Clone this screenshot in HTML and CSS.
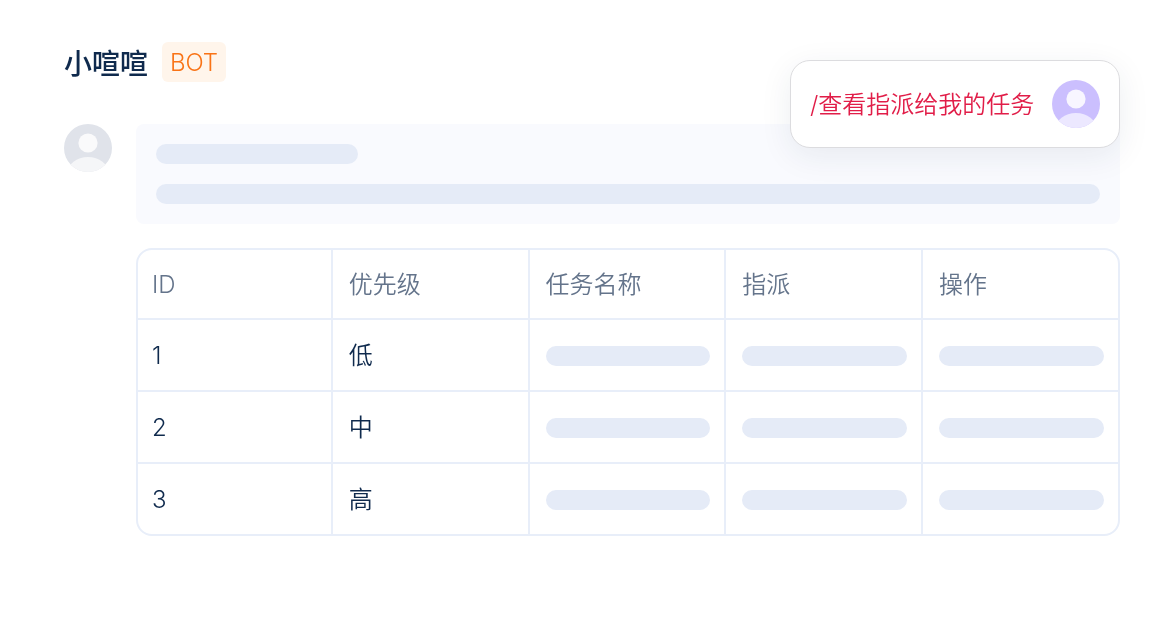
FILE: index.html
```html
<!DOCTYPE html>
<html lang="zh-CN">
<head>
<meta charset="utf-8">
<title>小喧喧 BOT</title>
<link rel="stylesheet" href="styles.css">
</head>
<body>
<main class="page">
  <header class="head">
    <h1 class="name">小喧喧</h1>
    <span class="tag">BOT</span>
  </header>
  <section class="message">
    <svg class="avatar" viewBox="0 0 48 48" aria-hidden="true">
      <defs><clipPath id="c1"><circle cx="24" cy="24" r="24"/></clipPath></defs>
      <circle cx="24" cy="24" r="24" fill="#e0e3ea"/>
      <circle cx="24" cy="19" r="9.6" fill="#fafafb"/>
      <ellipse cx="24" cy="49" rx="20.5" ry="16" fill="#f5f6f8" clip-path="url(#c1)"/>
    </svg>
    <div class="content">
      <div class="bubble">
        <div class="bar bar-short"></div>
        <div class="bar"></div>
      </div>
      <div class="table">
        <div class="cell th">ID</div>
        <div class="cell th zh">优先级</div>
        <div class="cell th zh">任务名称</div>
        <div class="cell th zh">指派</div>
        <div class="cell th zh">操作</div>

        <div class="cell">1</div>
        <div class="cell zh">低</div>
        <div class="cell skel"><div class="bar"></div></div>
        <div class="cell skel"><div class="bar"></div></div>
        <div class="cell skel"><div class="bar"></div></div>

        <div class="cell">2</div>
        <div class="cell zh">中</div>
        <div class="cell skel"><div class="bar"></div></div>
        <div class="cell skel"><div class="bar"></div></div>
        <div class="cell skel"><div class="bar"></div></div>

        <div class="cell last">3</div>
        <div class="cell zh last">高</div>
        <div class="cell skel last"><div class="bar"></div></div>
        <div class="cell skel last"><div class="bar"></div></div>
        <div class="cell skel last"><div class="bar"></div></div>
      </div>
    </div>
  </section>
  <aside class="command">
    <span class="command-text">/查看指派给我的任务</span>
    <svg class="avatar" viewBox="0 0 48 48" aria-hidden="true">
      <defs><clipPath id="c2"><circle cx="24" cy="24" r="24"/></clipPath></defs>
      <circle cx="24" cy="24" r="24" fill="#cbbffe"/>
      <circle cx="24" cy="19" r="9.6" fill="#f8f6ff"/>
      <ellipse cx="24" cy="49" rx="20.5" ry="16" fill="#ece8ff" clip-path="url(#c2)"/>
    </svg>
  </aside>
</main>
</body>
</html>
```

FILE: styles.css
```css
* { box-sizing: border-box; }
html, body { margin: 0; height: 100%; background: #fff; overflow: hidden; }
body { font-family: Inter, "Noto Sans CJK SC", sans-serif; color: #0f2a4d; }
.page { position: relative; width: 1174px; height: 642px; padding: 42px 54px 0 64px; will-change: transform; }
.head { display: flex; align-items: center; gap: 14px; height: 40px; }
.name { margin: 0; font-size: 28px; font-weight: 500; line-height: 40px; font-family: "Noto Sans CJK SC", sans-serif; }
.tag { width: 64px; height: 40px; padding-top: 1px; line-height: 40px; text-align: center; background: #fff5eb; border-radius: 6px; color: #f97316; font-size: 24px; font-weight: 300; }
.message { display: flex; gap: 24px; margin-top: 42px; }
.avatar { width: 48px; height: 48px; flex: none; display: block; }
.content { flex: 1; min-width: 0; display: flex; flex-direction: column; gap: 24px; }
.bubble { height: 100px; padding: 20px; background: #f9fafe; border-radius: 8px; display: flex; flex-direction: column; gap: 20px; }
.bar { height: 20px; width: 100%; background: #e5ebf7; border-radius: 10px; }
.bar-short { width: 202px; }
.table { display: grid; grid-template-columns: 194.75px 196.75px 196.75px 196.75px 195px; grid-template-rows: 70px 72px 72px 70px; height: 288px; border: 2px solid #e8eef9; border-radius: 16px; }
.cell { display: flex; align-items: center; padding: 0 14px 0 16px; border-right: 2px solid #e8eef9; border-bottom: 2px solid #e8eef9; font-size: 24px; font-weight: 300; }
.cell:nth-child(5n+1) { padding-left: 14px; }
.cell:nth-child(5n) { border-right: 0; }
.cell.last { border-bottom: 0; }
.zh { font-family: "Noto Sans CJK SC", sans-serif; font-weight: 350; padding-bottom: 4px; }
.skel { padding-top: 2px; }
.th { color: #64748b; }
.command { position: absolute; left: 790px; top: 60px; width: 330px; height: 88px; display: flex; align-items: center; justify-content: space-between; padding: 0 19px; background: #fff; border: 1px solid #dcdcdf; border-radius: 20px; box-shadow: 0 8px 32px rgba(30, 45, 80, .08); }
.command-text { color: #e11d48; font-size: 24px; font-weight: 350; white-space: nowrap; padding-bottom: 4px; }
```
